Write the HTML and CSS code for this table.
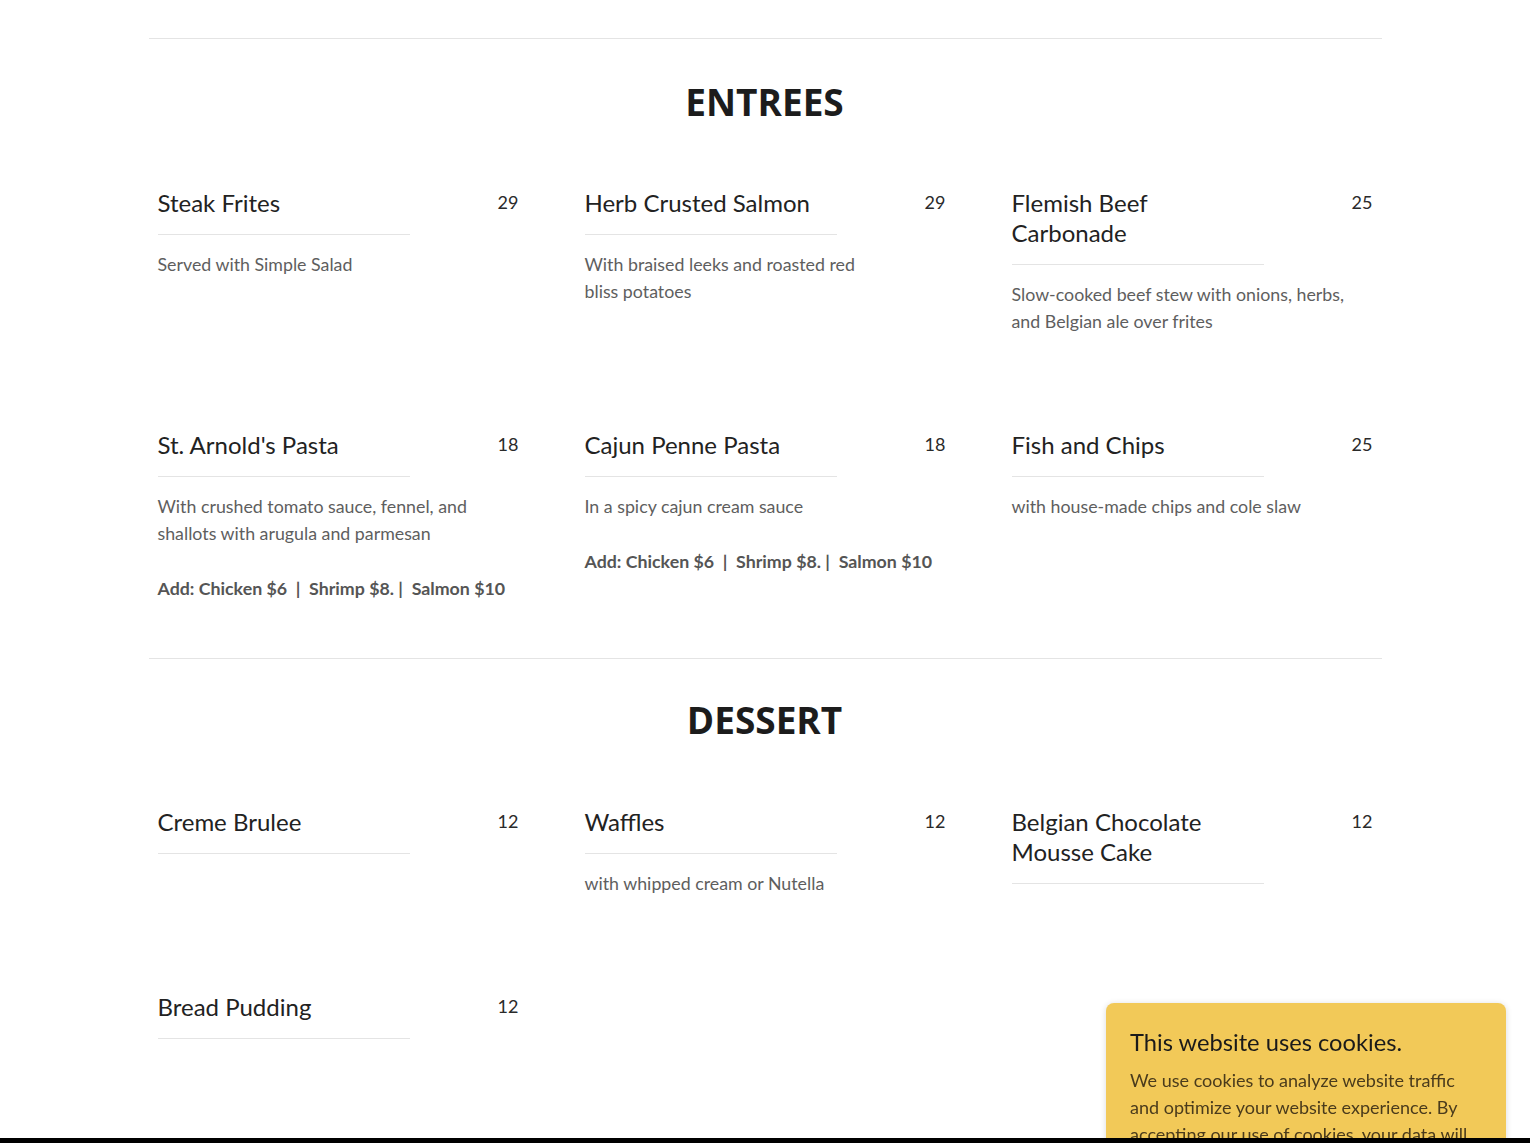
FILE: index.html
```html
<!DOCTYPE html>
<html lang="en">
<head>
<meta charset="utf-8">
<title>Menu</title>
<link rel="stylesheet" href="styles.css">
</head>
<body>
<main class="menu">
  <section class="menu-section">
    <h2 class="section-title">ENTREES</h2>
    <div class="items">
      <div class="item">
        <div class="item-head"><h3 class="item-name">Steak Frites</h3><span class="price">29</span></div>
        <div class="item-body"><p>Served with Simple Salad</p></div>
      </div>
      <div class="item">
        <div class="item-head"><h3 class="item-name">Herb Crusted Salmon</h3><span class="price">29</span></div>
        <div class="item-body"><p>With braised leeks and roasted red<br>bliss potatoes</p></div>
      </div>
      <div class="item">
        <div class="item-head"><h3 class="item-name">Flemish Beef Carbonade</h3><span class="price">25</span></div>
        <div class="item-body"><p>Slow-cooked beef stew with onions, herbs,<br>and Belgian ale over frites</p></div>
      </div>
      <div class="item">
        <div class="item-head"><h3 class="item-name">St. Arnold's Pasta</h3><span class="price">18</span></div>
        <div class="item-body"><p>With crushed tomato sauce, fennel, and<br>shallots with arugula and parmesan</p><p class="addon">Add: Chicken $6&nbsp; |&nbsp; Shrimp $8. |&nbsp; Salmon $10</p></div>
      </div>
      <div class="item">
        <div class="item-head"><h3 class="item-name">Cajun Penne Pasta</h3><span class="price">18</span></div>
        <div class="item-body"><p>In a spicy cajun cream sauce</p><p class="addon">Add: Chicken $6&nbsp; |&nbsp; Shrimp $8. |&nbsp; Salmon $10</p></div>
      </div>
      <div class="item">
        <div class="item-head"><h3 class="item-name">Fish and Chips</h3><span class="price">25</span></div>
        <div class="item-body"><p>with house-made chips and cole slaw</p></div>
      </div>
    </div>
  </section>
  <section class="menu-section">
    <h2 class="section-title">DESSERT</h2>
    <div class="items">
      <div class="item">
        <div class="item-head"><h3 class="item-name">Creme Brulee</h3><span class="price">12</span></div>
      </div>
      <div class="item">
        <div class="item-head"><h3 class="item-name">Waffles</h3><span class="price">12</span></div>
        <div class="item-body"><p>with whipped cream or Nutella</p></div>
      </div>
      <div class="item">
        <div class="item-head"><h3 class="item-name">Belgian Chocolate Mousse Cake</h3><span class="price">12</span></div>
      </div>
      <div class="item">
        <div class="item-head"><h3 class="item-name">Bread Pudding</h3><span class="price">12</span></div>
      </div>
    </div>
  </section>
</main>
<div class="cookie">
  <h4 class="cookie-title">This website uses cookies.</h4>
  <p class="cookie-text">We use cookies to analyze website traffic and optimize your website experience. By accepting our use of cookies, your data will be aggregated with all other user data.</p>
</div>
<div class="footer-edge"></div>
</body>
</html>
```
FILE: styles.css
```css
* { box-sizing: border-box; }
html, body { margin: 0; padding: 0; background: #fff; }
body {
  font-family: Lato, "Open Sans", "Liberation Sans", sans-serif;
  color: #1f1f1f;
  height: 1143px;
  overflow: hidden;
}
.menu {
  width: 1233px;
  margin: 0 auto;
  padding-top: 38px;
}
.menu-section {
  border-top: 1px solid #e4e4e4;
  padding: 0 10px 56px 9px;
}
.section-title {
  margin: 40px 0 63px;
  text-align: center;
  font-family: "Open Sans", "Noto Sans", sans-serif;
  font-weight: 700;
  font-size: 37px;
  line-height: 46px;
  letter-spacing: 0;
  color: #1c1c1c;
}
.menu-section + .menu-section .section-title { margin: 38px 0 64px; }
.items {
  display: grid;
  grid-template-columns: repeat(3, 360px);
  column-gap: 67px;
  row-gap: 95px;
}
.item-head {
  display: flex;
  justify-content: space-between;
  align-items: flex-start;
}
.item-name {
  margin: 0;
  width: 70%;
  font-weight: 400;
  font-size: 24px;
  line-height: 30px;
  color: #222;
  padding-bottom: 16px;
  border-bottom: 1px solid #e4e4e4;
}
.price {
  font-size: 18px;
  line-height: 28px;
  padding-left: 1px;
  margin-right: -1px;
  color: #2a2a2a;
}
.item-body {
  padding-top: 16px;
}
.item-body p {
  margin: 0;
  font-size: 17.8px;
  line-height: 27px;
  color: #5e5e5e;
  white-space: nowrap;
}
.item-body p + p { margin-top: 28px; }
.item-body .addon {
  font-weight: 700;
  color: #555;
}
.cookie {
  position: fixed;
  left: 1106px;
  top: 1003px;
  width: 400px;
  height: 260px;
  background: #f2c958;
  border-radius: 8px;
  box-shadow: 0 1px 6px rgba(0,0,0,0.15);
  padding: 22px 24px;
}
.cookie-title {
  margin: 0 0 8px;
  font-weight: 400;
  font-size: 23.7px;
  line-height: 34px;
  color: #1a1a1a;
}
.cookie-text {
  margin: 0;
  font-size: 18px;
  line-height: 27px;
  color: #4a3b1c;
}
.footer-edge {
  position: fixed;
  left: 0;
  right: 0;
  bottom: 0;
  height: 5px;
  background: #000;
  z-index: 5;
}
```
